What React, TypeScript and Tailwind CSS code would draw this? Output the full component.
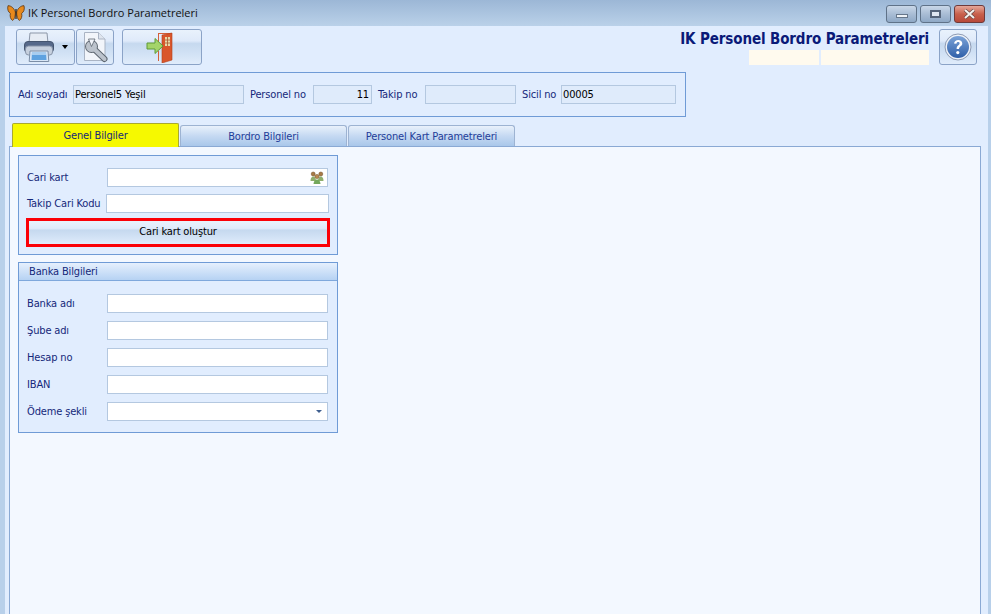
const font = "font-['DejaVu_Sans',Tahoma,sans-serif] [font-stretch:condensed] tracking-[-0.15px]";
const barFace = "bg-[linear-gradient(to_bottom,#e9f2fc_0%,#dfeafa_32%,#c6d9ef_40%,#d2e2f5_70%,#e0ecfb_100%)]";

function Butterfly() {
  return (
    <svg width="18" height="16" viewBox="0 0 18 16" aria-hidden="true">
      <path d="M8.4 7C7 3 4 .6 1 .7.2 4 1 7 3.4 8.4 2.6 11 3.6 14.6 5.6 15.4 7.4 14.6 8.4 11 8.4 7Z" fill="#e8891c" stroke="#5c3510" strokeWidth=".8" />
      <path d="M9.6 7C11 3 14 .6 17 .7c.8 3.3 0 6.3-2.4 7.7.8 2.6-.2 6.2-2.2 7-1.8-.8-2.8-4.4-2.8-8.4Z" fill="#e8891c" stroke="#5c3510" strokeWidth=".8" />
      <path d="M9 4v10" stroke="#2f2110" strokeWidth="1.2" />
    </svg>
  );
}

function Printer() {
  return (
    <svg width="32" height="32" viewBox="0 0 32 32" aria-hidden="true">
      <path d="M7 2h17l1 10H6Z" fill="#e6ecf4" stroke="#8c97a8" />
      <rect x="1.5" y="10.5" width="29" height="11" rx="3.5" fill="#56698a" stroke="#45556f" />
      <rect x="2.5" y="15" width="27" height="9" rx="3" fill="#c6d0de" stroke="#8794a8" />
      <path d="M7 20h18l.8 10.5H6.2Z" fill="#d9e7f7" stroke="#7c8ea6" />
      <path d="M9 21h14l.5 8H8.500Z" fill="#5ea2e0" />
      <path d="M9 21h14v3H9Z" fill="#a7cdf0" />
    </svg>
  );
}

function DocWrench() {
  return (
    <svg width="26" height="32" viewBox="0 0 26 32" aria-hidden="true">
      <path d="M2.500 1.500h14l6.500 6.500v21.500h-20.500Z" fill="#f2f5fa" stroke="#aab4c4" />
      <path d="M16.500 1.500v6.500h6.500" fill="#dfe5ee" stroke="#aab4c4" />
      <path d="M10 16l12.500 12" stroke="#5d6670" strokeWidth="6" strokeLinecap="round" />
      <circle cx="9.500" cy="15.500" r="6.500" fill="#5d6670" />
      <circle cx="9.500" cy="15.500" r="5.500" fill="#bcc3cc" />
      <path d="M10 16l12.500 12" stroke="#bcc3cc" strokeWidth="4" strokeLinecap="round" />
      <path d="M9.500 15.500L6.500 8h6.500Z" fill="#f2f5fa" stroke="#5d6670" strokeWidth=".8" />
    </svg>
  );
}

function ExitDoor() {
  return (
    <svg width="32" height="32" viewBox="0 0 32 32" aria-hidden="true">
      <path d="M12 2h14v25h-1V3H13v10h-1Z" fill="#d4603a" />
      <path d="M12 20h1v10h-1Z" fill="#d4603a" />
      <path d="M16 4l10-2v27l-10 3Z" fill="#d9562c" stroke="#b13f1b" strokeWidth=".6" />
      <rect x="19" y="6" width="5" height="9" fill="#e9d9a8" />
      <path d="M19 9h5M19 12h5M21.500 6v9" stroke="#a8562f" strokeWidth=".8" />
      <path d="M1 12h8V7.500l8 7.500-8 7.500V18H1Z" fill="#a4d46a" stroke="#5f9a36" />
    </svg>
  );
}

function HelpIcon() {
  return (
    <svg width="28" height="28" viewBox="0 0 28 28" aria-hidden="true">
      <defs>
        <linearGradient id="helpFill" x1="0" y1="0" x2="0" y2="1">
          <stop offset="0" stopColor="#7ba3d8" />
          <stop offset="1" stopColor="#2f5fa8" />
        </linearGradient>
      </defs>
      <circle cx="14" cy="14" r="13" fill="#eef2f8" stroke="#8d9bb4" />
      <circle cx="14" cy="14" r="11" fill="url(#helpFill)" />
      <path d="M10 10.500c.4-2.300 2-3.500 4.200-3.500 2.400 0 4.100 1.400 4.100 3.400 0 2.800-3.300 2.800-3.300 5.600h-2.400c0-3.900 3-3.800 3-5.500 0-.9-.6-1.400-1.500-1.400-1 0-1.500.6-1.700 1.700Z" fill="#fff" />
      <circle cx="13.800" cy="19.600" r="1.600" fill="#fff" />
    </svg>
  );
}

function People() {
  return (
    <svg width="14" height="13" viewBox="0 0 14 13" aria-hidden="true">
      <circle cx="3.200" cy="3" r="2" fill="#a87a46" stroke="#6d4a20" strokeWidth=".5" />
      <circle cx="10.800" cy="3" r="2" fill="#a87a46" stroke="#6d4a20" strokeWidth=".5" />
      <path d="M.5 10c0-3 1.200-4.500 2.700-4.500S6 7 6 10Z" fill="#8fae6c" />
      <path d="M8 10c0-3 1.200-4.500 2.800-4.500S13.500 7 13.500 10Z" fill="#8fae6c" />
      <circle cx="7" cy="5.500" r="2.100" fill="#b98a50" stroke="#6d4a20" strokeWidth=".5" />
      <path d="M3.500 13c0-2.700 1.700-4.500 3.500-4.500s3.500 1.800 3.500 4.500Z" fill="#74a85c" />
    </svg>
  );
}

function WinButton({ kind }: { kind: "min" | "max" | "close" }) {
  const tone =
    kind === "close"
      ? "border-[#6e3a3a] bg-gradient-to-b from-[#e4a79a] via-[#c8604c] to-[#b8493a]"
      : "border-[#5f7288] bg-gradient-to-b from-[#c9d7e8] via-[#a9bdd5] to-[#8fa9c6]";
  return (
    <div className={`flex h-[18px] w-[31px] items-center justify-center rounded-[3px] border ${tone}`}>
      {kind === "min" && <span className="mt-[3px] h-[4px] w-[12px] border border-[#66768a] bg-[#eef2f7]" />}
      {kind === "max" && <span className="h-[8px] w-[11px] border-2 border-[#55647a] bg-[#dfe7f1]" />}
      {kind === "close" && (
        <svg width="13" height="10" viewBox="0 0 13 10" aria-hidden="true">
          <path d="M2 1l9 8M11 1l-9 8" stroke="#6a4a48" strokeWidth="3.400" />
          <path d="M2 1l9 8M11 1l-9 8" stroke="#f4f1ee" strokeWidth="2" />
        </svg>
      )}
    </div>
  );
}

function ToolButton({ className, children }: { className: string; children: React.ReactNode }) {
  return (
    <div className={`flex h-[36px] items-center justify-center rounded-[3px] border border-[#8ba3c7] ${barFace} ${className}`}>
      {children}
    </div>
  );
}

function ReadField({ className, value, right }: { className: string; value?: string; right?: boolean }) {
  return (
    <div className={`flex h-[19px] items-center border border-[#b4c8e0] bg-[#dfebfb] px-[1px] pt-[1px] text-[11px] text-black ${right ? "justify-end pr-[2px]" : ""} ${className}`}>
      {value}
    </div>
  );
}

function Field({ className = "w-[221px]", children }: { className?: string; children?: React.ReactNode }) {
  return (
    <div className={`flex h-[19px] items-center justify-end border border-[#b4c8e0] bg-white pr-[3px] ${className}`}>
      {children}
    </div>
  );
}

function Row({ label, children }: { label: string; children?: React.ReactNode }) {
  return (
    <div className="flex h-[19px] items-center pl-[8px]">
      <span className="w-[80px] pt-[2px] text-[11px] text-[#15287a]">{label}</span>
      {children ?? <Field />}
    </div>
  );
}

function Tab({ label, active }: { label: string; active?: boolean }) {
  if (active) {
    return (
      <div className="z-10 mb-[-1px] flex h-[24px] w-[167px] items-center justify-center rounded-t-[2px] border border-b-0 border-[#a9a930] bg-[#f6f900] pt-[2px] text-[11px] text-[#15287a]">
        {label}
      </div>
    );
  }
  return (
    <div className="flex h-[21px] w-[167px] items-center justify-center rounded-t-[3px] border border-b-0 border-[#9db3d2] bg-gradient-to-b from-[#e9f1fb] via-[#c5d9f2] to-[#a9c7ea] pt-[2px] text-[11px] text-[#1f3d99]">
      {label}
    </div>
  );
}

export default function App() {
  return (
    <div className={`flex h-[614px] w-[991px] flex-col overflow-hidden bg-[#b8d0ea] ${font}`}>
      <div className="flex h-[26px] shrink-0 items-center justify-between bg-gradient-to-b from-[#9cb7d6] to-[#bad1e9] pl-[7px] pr-[6px]">
        <div className="flex items-center gap-[3px] font-['Open_Sans',sans-serif] text-[11px] tracking-normal text-[#111] [font-stretch:normal]">
          <Butterfly />
          <span>IK Personel Bordro Parametreleri</span>
        </div>
        <div className="flex gap-[3px] self-start pt-[5px]">
          <WinButton kind="min" />
          <WinButton kind="max" />
          <WinButton kind="close" />
        </div>
      </div>

      <div className="ml-[5px] mr-[3px] flex min-h-0 flex-1 flex-col bg-[#e1edfe]">
        <div className="flex justify-between pl-[11px] pr-[11px] pt-[3px]">
          <div className="flex">
            <ToolButton className="w-[59px] justify-start gap-[7px] pl-[6px]">
              <Printer />
              <span className="h-0 w-0 border-x-[3.500px] border-t-[4px] border-x-transparent border-t-black" />
            </ToolButton>
            <ToolButton className="ml-[1px] w-[38px]">
              <DocWrench />
            </ToolButton>
            <ToolButton className="ml-[8px] w-[80px]">
              <ExitDoor />
            </ToolButton>
          </div>
          <div className="flex gap-[10px]">
            <div className="flex flex-col items-end">
              <span className="h-[21px] text-[15px] font-bold leading-[21px] tracking-[-0.12px] text-[#0a1a78]">IK Personel Bordro Parametreleri</span>
              <div className="flex gap-[2px]">
                <span className="h-[15px] w-[70px] bg-[#fffaee]" />
                <span className="h-[15px] w-[108px] bg-[#fffaee]" />
              </div>
            </div>
            <ToolButton className="w-[38px]">
              <HelpIcon />
            </ToolButton>
          </div>
        </div>

        <div className="ml-[4px] mt-[7px] flex h-[45px] w-[677px] items-center border border-[#6f9bd6] pl-[8px] text-[11px] text-[#15287a]">
          <span className="w-[55px] pt-[1px]">Adı soyadı</span>
          <ReadField className="w-[171px]" value="Personel5 Yeşil" />
          <span className="ml-[6px] w-[63px] pt-[1px]">Personel no</span>
          <ReadField className="w-[59px]" value="11" right />
          <span className="ml-[6px] w-[47px] pt-[1px]">Takip no</span>
          <ReadField className="w-[91px]" />
          <span className="ml-[6px] w-[39px] pt-[1px]">Sicil no</span>
          <ReadField className="w-[115px]" value="00005" />
        </div>

        <div className="ml-[7px] mt-[6px] flex h-[23px] items-end gap-[1px]">
          <Tab label="Genel Bilgiler" active />
          <Tab label="Bordro Bilgileri" />
          <Tab label="Personel Kart Parametreleri" />
        </div>

        <div className="ml-[4px] mr-[7px] flex-1 border border-b-0 border-[#8aa9d4] bg-[#f3f8ff] pl-[8px] pt-[8px]">
          <div className="h-[100px] w-[320px] border border-[#6f9bd6] bg-[#e1edfe] pt-[12px]">
            <Row label="Cari kart">
              <Field>
                <People />
              </Field>
            </Row>
            <div className="mt-[7px] flex h-[19px] items-center pl-[8px]">
              <span className="w-[79px] pt-[2px] text-[11px] text-[#15287a]">Takip Cari Kodu</span>
              <Field className="w-[223px]" />
            </div>
            <div className={`ml-[7px] mt-[5px] flex h-[29px] w-[304px] items-center justify-center border-[3px] border-[#fb0007] text-[11px] text-black ${barFace}`}>
              Cari kart oluştur
            </div>
          </div>

          <div className="mt-[7px] h-[171px] w-[320px] border border-[#6f9bd6] bg-[#e1edfe]">
            <div className="flex h-[18px] items-center border-b border-[#7fa8dc] bg-gradient-to-b from-[#e6f0fd] to-[#b6d2f3] pl-[10px] pt-[2px] text-[11px] text-[#15287a]">
              Banka Bilgileri
            </div>
            <div className="mt-[13px] flex flex-col gap-[8px]">
              <Row label="Banka adı" />
              <Row label="Şube adı" />
              <Row label="Hesap no" />
              <Row label="IBAN" />
              <Row label="Ödeme şekli">
                <Field>
                  <span className="mr-[2px] h-0 w-0 border-x-[3px] border-t-[3px] border-x-transparent border-t-[#3f5f8f]" />
                </Field>
              </Row>
            </div>
          </div>
        </div>
      </div>
    </div>
  );
}
